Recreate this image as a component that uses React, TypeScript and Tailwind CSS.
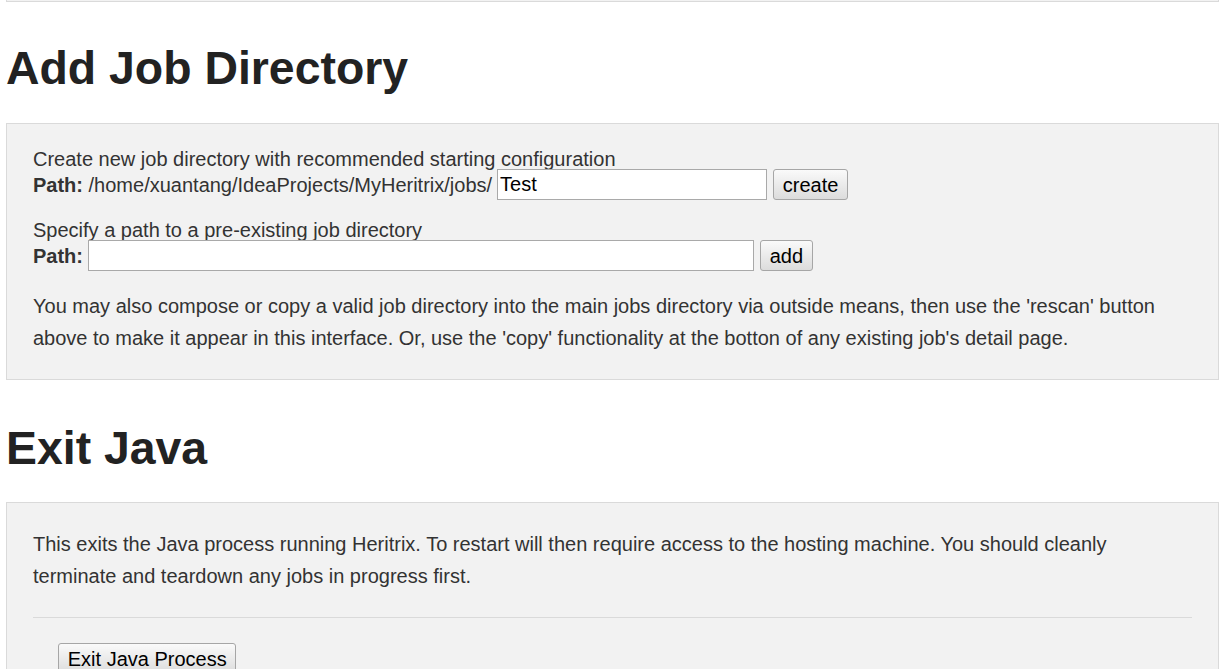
import React from 'react'

const box = 'border border-[#dadada] bg-[#f2f2f2] px-[26px]'
const btn =
  'h-[31px] px-[8.75px] border border-[#a6a6a6] rounded-[3px] bg-linear-to-b from-[#fafafa] to-[#dcdcdc] text-[20px] leading-none text-black'
const field = 'h-[31px] border border-[#a9a9a9] bg-white px-[2px] text-[20px] text-black outline-none'

export default function App() {
  return (
    <div className="h-[669px] overflow-hidden bg-white font-['Liberation_Sans',Arial,sans-serif] text-[20px] text-[#333]">
      <div className="ml-[6px] w-[1213px]">
        {/* tail of the panel above */}
        <div className="h-[2px] bg-[#f2f2f2] border-x border-b border-[#dadada]" />

        <h1 className="mt-[38px] text-[46.4px] leading-[56px] font-bold text-[#222]">Add Job Directory</h1>

        <div className={`${box} mt-[27px] pt-[25px] pb-[25px]`}>
          <div className="leading-[20px]">Create new job directory with recommended starting configuration</div>
          <div className="flex items-center h-[31px]">
            <span>
              <b>Path:</b> /home/xuantang/IdeaProjects/MyHeritrix/jobs/
            </span>
            <input className={`${field} ml-[5px] w-[270px]`} defaultValue="Test" />
            <button className={`${btn} ml-[6px]`}>create</button>
          </div>

          <div className="mt-[20px] leading-[20px]">Specify a path to a pre-existing job directory</div>
          <div className="flex items-center h-[31px]">
            <b>Path:</b>
            <input className={`${field} ml-[5px] w-[666px]`} />
            <button className={`${btn} ml-[6px]`}>add</button>
          </div>

          <p className="mt-[19px] leading-[32px]">
            You may also compose or copy a valid job directory into the main jobs directory via outside means, then
            use the 'rescan' button above to make it appear in this interface. Or, use the 'copy' functionality at the
            botton of any existing job's detail page.
          </p>
        </div>

        <h1 className="mt-[40px] text-[46.4px] leading-[56px] font-bold text-[#222]">Exit Java</h1>

        <div className={`${box} mt-[26px] pt-[25px] pb-[25px]`}>
          <p className="leading-[32px]">
            This exits the Java process running Heritrix. To restart will then require access to the hosting machine.
            You should cleanly terminate and teardown any jobs in progress first.
          </p>
          <hr className="mt-[25px] border-t border-[#dadada]" />
          <div className="mt-[25px] pl-[25px]">
            <button className={btn}>Exit Java Process</button>
          </div>
        </div>
      </div>
    </div>
  )
}
